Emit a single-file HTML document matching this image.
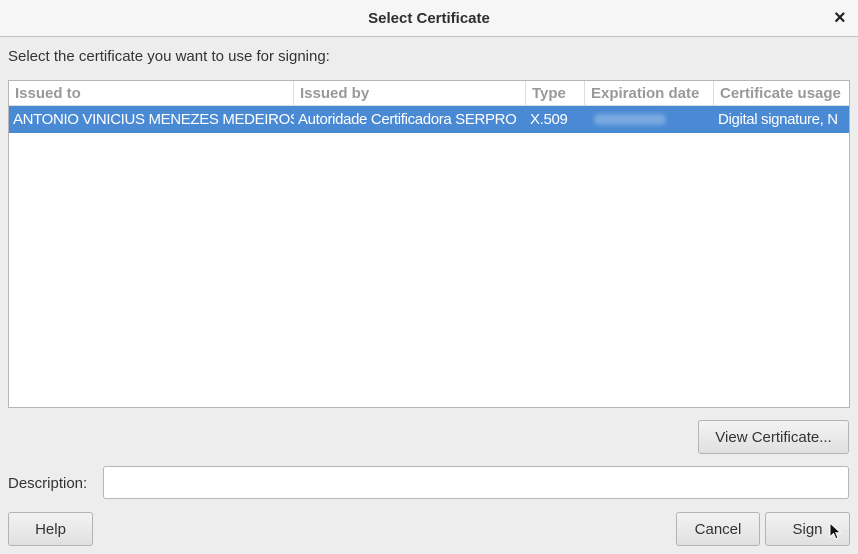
<html><head><style>
body{margin:0;width:858px;height:554px;background:#ededed;font-family:"Liberation Sans","DejaVu Sans",sans-serif;font-size:15px;color:#333;position:relative;overflow:hidden}
.abs{position:absolute}
.title{left:0;top:0;width:858px;height:36px;background:#f6f6f6;border-bottom:1px solid #c2c2c2;text-align:center;line-height:38px;font-weight:bold;color:#2e2e2e}
.btn{position:absolute;border:1px solid #b4b4b4;border-radius:3px;background:linear-gradient(#f3f3f3,#e0e0e0);text-align:center;line-height:33px;color:#333;box-sizing:border-box}
.hd{position:absolute;top:0;height:24px;line-height:25px;font-weight:bold;color:#999;padding-left:6px;border-right:1px solid #ddd;box-sizing:border-box}
.cell{position:absolute;top:25px;height:27px;line-height:28px;color:#fff;padding-left:4px;white-space:nowrap;overflow:hidden;box-sizing:border-box;letter-spacing:-0.35px}
</style></head><body>
<div class="abs title">Select Certificate</div>
<div class="abs" style="left:834px;top:7px;font-size:20px;font-weight:bold;color:#222">×</div>
<div class="abs" style="left:8px;top:48px">Select the certificate you want to use for signing:</div>
<div class="abs" style="left:8px;top:80px;width:840px;height:326px;background:#fff;border:1px solid #b6b6b6;overflow:hidden">
<div class="abs" style="left:0;top:0;width:840px;height:24px;border-bottom:1px solid #ddd"></div>
<div class="hd" style="left:0;width:285px">Issued to</div>
<div class="hd" style="left:285px;width:232px">Issued by</div>
<div class="hd" style="left:517px;width:59px">Type</div>
<div class="hd" style="left:576px;width:129px">Expiration date</div>
<div class="hd" style="left:705px;width:140px;border:0">Certificate usage</div>
<div class="abs" style="left:0;top:25px;width:840px;height:27px;background:#4a8ad4"></div>
<div class="cell" style="left:0;width:285px">ANTONIO VINICIUS MENEZES MEDEIROS</div>
<div class="cell" style="left:285px;width:232px">Autoridade Certificadora SERPRO</div>
<div class="cell" style="left:517px;width:59px">X.509</div>
<div class="abs" style="left:585px;top:33px;width:72px;height:11px;background:#7aa9e0;border-radius:5px;filter:blur(2px)"></div>
<div class="cell" style="left:705px;width:135px">Digital signature, N</div>
</div>
<div class="btn" style="left:698px;top:420px;width:151px;height:34px">View Certificate...</div>
<div class="abs" style="left:8px;top:475px">Description:</div>
<div class="abs" style="left:103px;top:466px;width:746px;height:33px;background:#fff;border:1px solid #b6b6b6;border-radius:3px;box-sizing:border-box"></div>
<div class="btn" style="left:8px;top:512px;width:85px;height:34px">Help</div>
<div class="btn" style="left:676px;top:512px;width:84px;height:34px">Cancel</div>
<div class="btn" style="left:765px;top:512px;width:85px;height:34px">Sign</div>
<svg class="abs" style="left:829px;top:522px" width="14" height="20" viewBox="0 0 14 20"><path d="M1 1 L1 15 L4.5 11.5 L7 17 L9 16 L6.8 10.8 L11.5 10.8 Z" fill="#111" stroke="#fff" stroke-width="1"/></svg>
</body></html>
